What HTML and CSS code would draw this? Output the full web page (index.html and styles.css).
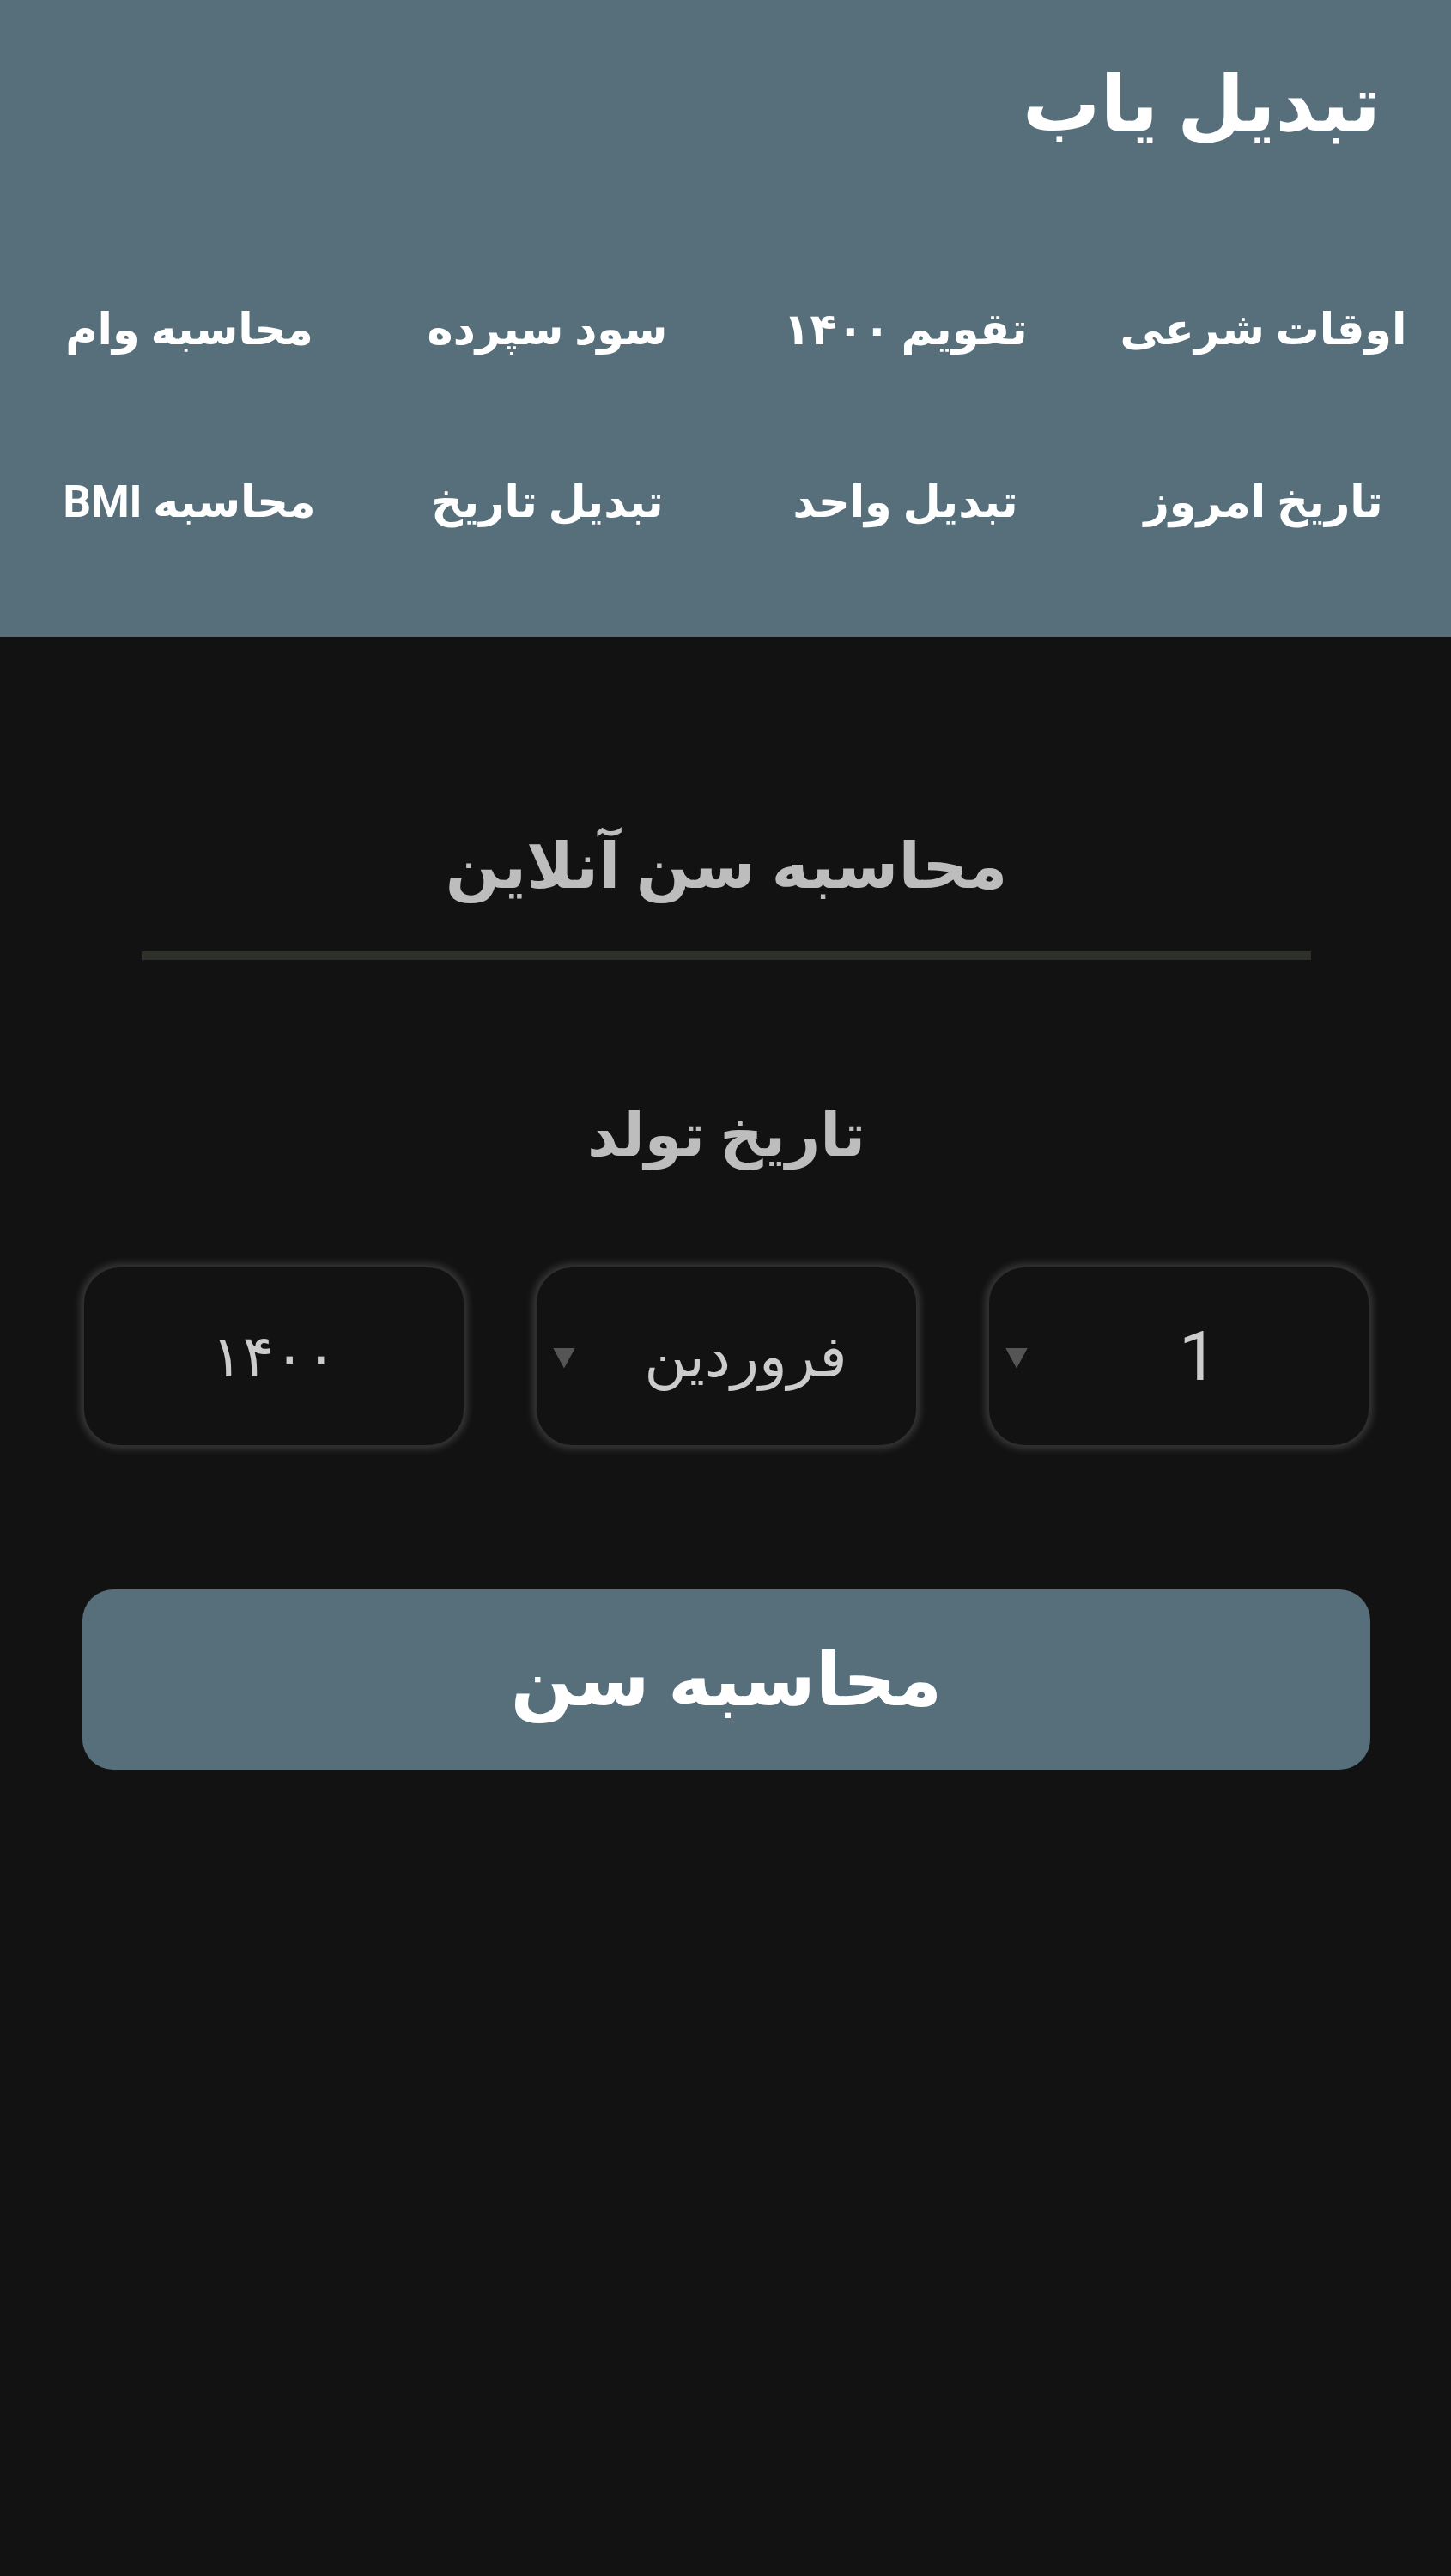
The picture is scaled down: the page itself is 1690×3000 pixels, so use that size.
FILE: index.html
```html
<!DOCTYPE html>
<html lang="fa" dir="rtl">
<head>
<meta charset="utf-8">
<title>محاسبه سن آنلاین - تبدیل یاب</title>
<link rel="stylesheet" href="styles.css">
</head>
<body>
<header class="site-header">
  <h1 class="brand">تبدیل یاب</h1>
  <nav class="nav">
    <a class="nav-item" href="#">اوقات شرعی</a>
    <a class="nav-item" href="#">تقویم ۱۴۰۰</a>
    <a class="nav-item" href="#">سود سپرده</a>
    <a class="nav-item" href="#">محاسبه وام</a>
    <a class="nav-item" href="#">تاریخ امروز</a>
    <a class="nav-item" href="#">تبدیل واحد</a>
    <a class="nav-item" href="#">تبدیل تاریخ</a>
    <a class="nav-item" href="#">محاسبه BMI</a>
  </nav>
</header>
<main class="content">
  <h2 class="page-title">محاسبه سن آنلاین</h2>
  <div class="divider"></div>
  <h3 class="label">تاریخ تولد</h3>
  <div class="fields">
    <div class="field select">
      <span class="field-text digit">1</span>
      <span class="arrow"></span>
    </div>
    <div class="field select">
      <span class="field-text">فروردین</span>
      <span class="arrow"></span>
    </div>
    <div class="field input">
      <span class="field-text">۱۴۰۰</span>
    </div>
  </div>
  <button class="submit" type="button">محاسبه سن</button>
</main>
</body>
</html>
```
FILE: styles.css
```css
* { box-sizing: border-box; }
html, body {
  margin: 0;
  padding: 0;
  background: #121212;
}
body {
  font-family: "Roboto", "DejaVu Sans", sans-serif;
  min-height: 3000px;
  direction: rtl;
}
.site-header {
  background: #566f7b;
  height: 742px;
  padding: 62px 82px 0 12px;
}
.brand {
  margin: 0;
  color: #ffffff;
  font-size: 90px;
  font-weight: 700;
  line-height: 120px;
  text-align: right;
}
.nav {
  display: grid;
  grid-template-columns: repeat(4, 1fr);
  grid-auto-rows: 201px;
  margin-top: 101px;
  margin-left: 0;
  margin-right: -72px;
}
.nav-item {
  color: #ffffff;
  text-decoration: none;
  font-size: 51px;
  font-weight: 700;
  display: flex;
  align-items: center;
  justify-content: center;
}
.content {
  padding: 0 94px 0 96px;
  display: flex;
  flex-direction: column;
  align-items: stretch;
}
.page-title {
  margin: 212px 0 0;
  color: #bdbdbd;
  font-size: 74px;
  font-weight: 700;
  line-height: 110px;
  text-align: center;
}
.divider {
  height: 10px;
  background: #2e302a;
  margin: 44px 69px 0 69px;
}
.label {
  margin: 154px 0 0;
  color: #bdbdbd;
  font-size: 70px;
  font-weight: 700;
  line-height: 100px;
  text-align: center;
}
.fields {
  display: grid;
  grid-template-columns: repeat(3, 446px);
  justify-content: space-between;
  margin-top: 102px;
}
.field {
  height: 211px;
  border-radius: 44px;
  border: 2px solid #2e2e2e;
  background: #121212;
  box-shadow: 0 0 10px 2px rgba(255, 255, 255, 0.18);
  display: flex;
  align-items: center;
  color: #cccccc;
  font-size: 68px;
}
.field-text.digit {
  font-size: 80px;
}
.field.select {
  direction: rtl;
  padding-left: 19px;
}
.field-text {
  flex: 1;
  text-align: center;
}
.arrow {
  width: 26px;
  height: 24px;
  background: #555555;
  clip-path: polygon(0 0, 100% 0, 50% 100%);
  margin-top: 4px;
}
.submit {
  margin-top: 166px;
  height: 210px;
  border: none;
  border-radius: 36px;
  background: #566f7b;
  color: #ffffff;
  font-family: "Roboto", "DejaVu Sans", sans-serif;
  font-size: 86px;
  font-weight: 700;
  text-align: center;
}
```
